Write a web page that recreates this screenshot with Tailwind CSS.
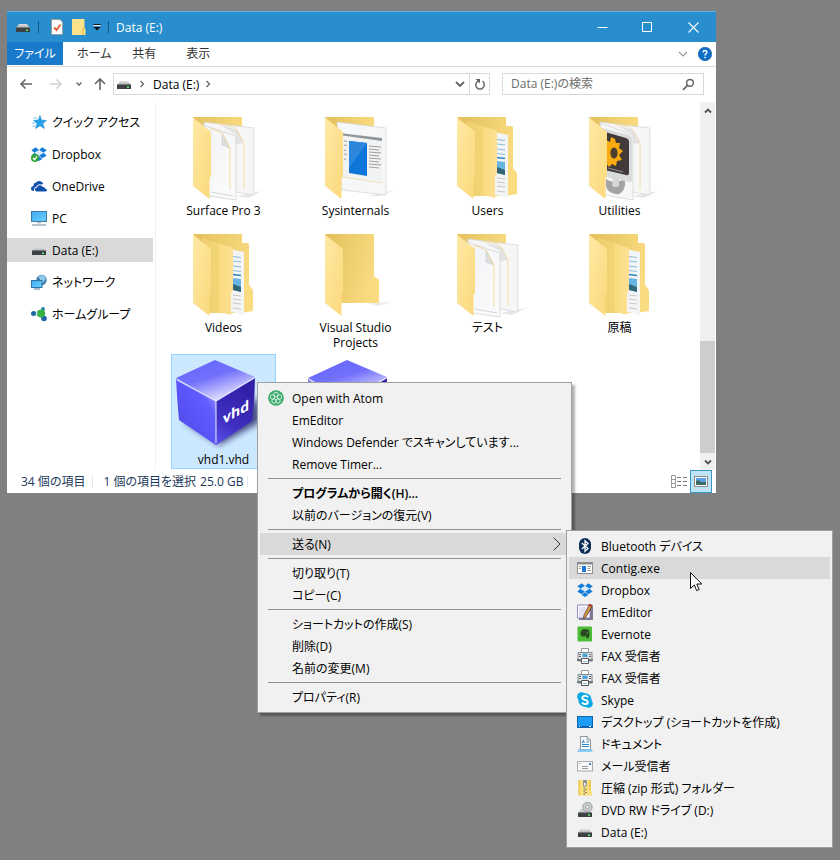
<!DOCTYPE html>
<html lang="ja">
<head>
<meta charset="utf-8">
<title>Data (E:)</title>
<script src="https://cdn.jsdelivr.net/npm/@tailwindcss/browser@4"></script>
</head>
<body class="relative min-h-screen overflow-hidden bg-[#808080] pt-[11px] pr-[124px] pl-[7px] font-['Open_Sans','Noto_Sans_CJK_JP',sans-serif] text-[12px] leading-[15px] text-black [font-feature-settings:'palt']">

<svg class="absolute size-0" aria-hidden="true">
  <defs>
    <linearGradient id="gFront" x1="0" y1="0" x2="1" y2="1"><stop offset="0" stop-color="#ffe9a6"/><stop offset="1" stop-color="#fbd97a"/></linearGradient>
    <linearGradient id="gBack" x1="0" y1="0" x2="1" y2="0.3"><stop offset="0" stop-color="#e3c05c"/><stop offset="1" stop-color="#fadb80"/></linearGradient>
    <linearGradient id="gMid" x1="0" y1="0" x2="1" y2="0"><stop offset="0" stop-color="#efcf6f"/><stop offset=".55" stop-color="#f3d577"/><stop offset=".56" stop-color="#fadc82"/><stop offset="1" stop-color="#fde093"/></linearGradient>
    <linearGradient id="gPage" x1="0" y1="0" x2="1" y2="1"><stop offset="0" stop-color="#f0f2f5"/><stop offset="1" stop-color="#fbfcfd"/></linearGradient>
    <linearGradient id="gTop" x1="0.1" y1="0" x2="0.7" y2="1"><stop offset="0" stop-color="#6664ff"/><stop offset=".45" stop-color="#7270fb"/><stop offset="1" stop-color="#f4f4ff"/></linearGradient>
    <linearGradient id="gLeft" x1="0" y1="1" x2="1" y2="0"><stop offset="0" stop-color="#4d46e6"/><stop offset=".7" stop-color="#605cff"/><stop offset="1" stop-color="#b6b4ff"/></linearGradient>
    <linearGradient id="gRight" x1="0" y1="1" x2="0.4" y2="0"><stop offset="0" stop-color="#5b52f2"/><stop offset=".4" stop-color="#3f2fc0"/><stop offset="1" stop-color="#3020a8"/></linearGradient>
    <linearGradient id="gScreen" x1="0" y1="0" x2="1" y2="1"><stop offset="0" stop-color="#3fa9f0"/><stop offset="1" stop-color="#6fd0ff"/></linearGradient>
    <linearGradient id="gDrive" x1="0" y1="0" x2="0" y2="1"><stop offset="0" stop-color="#e4e4e4"/><stop offset="1" stop-color="#a9adae"/></linearGradient>
    <filter id="blur"><feGaussianBlur stdDeviation="3"/></filter>

    <symbol id="back" viewBox="0 0 96 96"><path d="M60 80L84 79L70 83Z" fill="#ececec"/><path d="M17 11H66V53L71 57V80H33L17 70Z" fill="url(#gBack)"/></symbol>
    <symbol id="front" viewBox="0 0 96 96"><path d="M17 11.500L35 26V70L33.500 72V93L17 80Z" fill="url(#gFront)"/></symbol>
    <symbol id="folder" viewBox="0 0 96 96"><use href="#back"/><use href="#front"/></symbol>
    <symbol id="pageR" viewBox="0 0 96 96"><path d="M17 11H66V40H30Z" fill="url(#gBack)"/><path d="M60 90L86 85L72 92Z" fill="#e6e6e6"/><path d="M28 16L78 22V89L60 86H34Z" fill="#f6f6f7" stroke="#d2d2d2" stroke-width=".7"/><path d="M45 20Q58 22 62 25L68 37L60 38V28Z" fill="#e3e3e5"/><path d="M43 18.500Q58 20 61 24L68 37V83" fill="none" stroke="#f3d995" stroke-width=".8"/></symbol>
    <symbol id="papers" viewBox="0 0 96 96"><use href="#pageR"/><path d="M24 18L60 30V94L33 90Z" fill="url(#gPage)" stroke="#cfcfcf" stroke-width=".7"/><path d="M46 27V39L54 42Z" fill="#dcdde0" stroke="#c4c4c4" stroke-width=".5"/><path d="M34 23Q43 24 47 29L54 42V84" fill="none" stroke="#f3d995" stroke-width=".9"/><path d="M35 86L57 90" stroke="#c8c8c8" stroke-width=".7"/><use href="#front"/></symbol>
    <symbol id="docs" viewBox="0 0 96 96"><path d="M17 11H66V20H71L73 21V62L77 67V88L65 90H30V30Z" fill="url(#gBack)"/><path d="M50 25L68 29V92L52 88Z" fill="#f3f4f6"/><g stroke="#7ab8d8" stroke-width=".9"><path d="M57 33.500L65 34.500M57 38L65 39M57 43L65 44M57 47.500L65 48.500"/><path d="M57 51.500L65 52.500" stroke="#2a86b8" stroke-width="1.300"/></g><path d="M57 55L65 56V69L57 67Z" fill="#68b4e2"/><path d="M57 61L65 64V69L57 67Z" fill="#316779"/><path d="M57 72L65 73M57 76L65 77M57 80L65 81M57 85L65 86" stroke="#bdbdbd" stroke-width=".8"/><path d="M26 15L57 25V67L55 71V92L33 86Z" fill="url(#gMid)"/><use href="#front"/></symbol>
    <symbol id="sysint" viewBox="0 0 96 96"><path d="M17 11H66V40H30Z" fill="url(#gBack)"/><path d="M60 90L86 84L72 90Z" fill="#e6e6e6"/><path d="M29 16L78 22V89L34 84Z" fill="#f6f7f8" stroke="#d2d2d2" stroke-width=".7"/><path d="M31 27L74 33V76L31 70Z" fill="#f1f2f3"/><path d="M31 27L74 32V35L31 29Z" fill="#939699"/><path d="M41 35L59 37V70L41 67Z" fill="#0c77d8"/><path d="M41 35L59 37L41 62Z" fill="#2c86dc"/><path d="M61 40L73 41M61 43L71 44M61 46L73 47M61 49L71 50M61 52L73 53M61 55L71 56M61 58L73 59M61 61L71 62M36 35L39 35.500M36 39L39 39.500M36 44L38 44.500M36 48L39 48.500M36 53L38 53.500" stroke="#969696" stroke-width=".9"/><path d="M35 71L74 77" stroke="#ecd9a2" stroke-width=".8"/><use href="#front"/></symbol>
    <symbol id="util" viewBox="0 0 96 96"><use href="#pageR"/><path d="M28 17L61 29V94L33 89Z" fill="#f7f7f8" stroke="#d0d0d0" stroke-width=".7"/><path d="M34 73Q42 79 53 73V80Q50 90 43 88Q35 86 34 80Z" fill="#a4a4a4"/><path d="M41 68H47V80Q43 82 40 80Z" fill="#d7d7d7"/><path d="M30 22L57 29Q60 30 60 33V74Q60 76 57 76L30 70Z" fill="#d9dadb"/><path d="M33 26L54 32Q57 33 57 36V67Q57 70 54 69L33 64Z" fill="#413a38"/><path d="M36 62L51 66" stroke="#aaa" stroke-width=".8"/><path d="M39 31L43 33L44 37L48 37L47 42L51 45L47 49L50 54L45 55L44 60L40 58L37 61L34 57V34L38 36Z" fill="#fbab10"/><ellipse cx="42" cy="47" rx="3.600" ry="5.500" fill="#4b3e30"/><use href="#front"/></symbol>
    <symbol id="vhd" viewBox="0 0 96 96"><path d="M7 66L43 90L84 67L82 42L60 60Z" fill="#16125c" opacity=".75" filter="url(#blur)"/><path d="M0 24L40 46V90L3 65Q1 44 0 24Z" fill="url(#gLeft)"/><path d="M79 23L40 46V90L76 66Q79 44 79 23Z" fill="url(#gRight)"/><path d="M0 23L39 5L79 22L40 46Z" fill="url(#gTop)"/><path d="M1 25L40 46L78 23M40 46V88" fill="none" stroke="#e9e8ff" stroke-width="1.200" opacity=".85"/><text transform="translate(47 69) skewY(-29)" font-family="Open Sans" font-weight="700" font-size="14" fill="#fff">vhd</text></symbol>

    <symbol id="drive" viewBox="0 0 16 16"><path d="M4 5H12L15 9H1Z" fill="url(#gDrive)"/><rect x="1" y="8.500" width="14" height="4.500" rx=".5" fill="#3d4144"/><rect x="11" y="10.500" width="2" height="1.500" fill="#5ef06a"/></symbol>
    <symbol id="star" viewBox="0 0 16 16"><path d="M9 1.500L10.500 6L15.500 6.500L11.800 9.500L13.500 14.500L9 11.800L4.500 14.500L6 9.500L2.500 6.500L7.300 6Z" fill="#25a2ec" stroke="#1580c4" stroke-width=".5"/><path d="M2 4H6M1 9H4M1.500 12H4.500" stroke="#76c6f2"/></symbol>
    <symbol id="dropbox" viewBox="0 0 16 16"><path fill="#137ddc" d="M4.700 1.300L8 4L3.500 6.800L.3 4.200ZM11.300 1.300L8 4L12.500 6.800L15.700 4.200ZM.3 9.400L3.500 6.800L8 9.600L4.700 12.200ZM15.700 9.400L12.500 6.800L8 9.600L11.300 12.200ZM4.700 13L8 10.300L11.300 13L8 15Z"/><path d="M8 4L12.500 6.800L8 9.600L3.500 6.800Z" fill="#dbe9f8"/></symbol>
    <symbol id="dropboxOk" viewBox="0 0 16 16"><use href="#dropbox"/><circle cx="4" cy="12" r="4" fill="#35a43a"/><path d="M2 12L3.500 13.700L6 10.300" stroke="#fff" stroke-width="1.200" fill="none"/></symbol>
    <symbol id="onedrive" viewBox="0 0 16 16"><path d="M3 13Q0 13 0 10.500Q0 8.300 2.500 8Q2.500 4.800 5.500 4.200Q7 2.800 9 3.200Q11.500 3.500 12.200 6L10 6.500Q7 5.500 5.500 8.500Q3 9 3 11.500Z" fill="#0f50ad"/><path d="M5.500 13.500Q3.700 13 3.900 11.300Q4.200 9.600 6 9.500Q6.500 7.200 9 7.200Q11 7.200 11.800 9Q13.800 8.700 14 10.500Q16 10.800 16 12.200Q15.800 13.500 14.500 13.500Z" fill="#0f50ad"/></symbol>
    <symbol id="pc" viewBox="0 0 16 16"><rect x=".5" y="1.500" width="15" height="10" fill="url(#gScreen)" stroke="#3b7ba6"/><path d="M6 12H10V13.500H6Z" fill="#b6c4cd"/><path d="M1 15H15" stroke="#6e8495"/></symbol>
    <symbol id="net" viewBox="0 0 16 16"><circle cx="10.500" cy="6" r="5.200" fill="#3f7da8"/><path d="M7 3Q10 5 9 8L12 9Q14 6 15 4Q12 0 8 2Z" fill="#8dcdea"/><rect x=".5" y="6.500" width="10.500" height="7" fill="url(#gScreen)" stroke="#2c76a5"/><path d="M3 15H9" stroke="#56758c"/></symbol>
    <symbol id="home" viewBox="0 0 16 16"><path d="M3 7L11 4M3 8L12 12" stroke="#7fb2d4"/><circle cx="2.500" cy="7.500" r="2.500" fill="#1f66a8"/><circle cx="12" cy="3" r="2" fill="#2a86b2"/><circle cx="13" cy="12.500" r="2.800" fill="#1f66a8"/><circle cx="10.200" cy="7.500" r="4" fill="#35b344"/></symbol>
    <symbol id="atom" viewBox="0 0 16 16"><circle cx="8" cy="8" r="7.800" fill="#3dab6f"/><g fill="none" stroke="#def5e6" stroke-width=".9"><circle cx="8" cy="4.500" r="2.200"/><circle cx="4.600" cy="7" r="2.200"/><circle cx="11.400" cy="7" r="2.200"/><circle cx="6" cy="11" r="2.200"/><circle cx="10" cy="11" r="2.200"/></g></symbol>
    <symbol id="bt" viewBox="0 0 16 16"><rect x="2" y="0" width="12" height="16" rx="6" fill="#0c2d57"/><path d="M4.800 5L11 10.500L8 13.300V2.700L11 5.500L4.800 11" fill="none" stroke="#fff" stroke-width="1.300"/></symbol>
    <symbol id="contig" viewBox="0 0 16 16"><rect x=".5" y="2.500" width="15" height="11" fill="#fff" stroke="#8d8d8d"/><path d="M0 2H16V4.500H0Z" fill="#8d8d8d"/><rect x="5" y="6" width="4" height="6" fill="#1479d7"/><path d="M10.500 6.500H14M10.500 8.500H13M10.500 10.500H14M2 6.500H4M2 8.500H4" stroke="#999"/></symbol>
    <symbol id="em" viewBox="0 0 16 16"><path d="M2 3H16V16H2Z" fill="#82788f"/><path d="M.5 1H13V14H.5Z" fill="#fff" stroke="#7b72b8" stroke-width=".8"/><path d="M2 4H9M2 6H9M2 8H8M2 10H7M2 12H6" stroke="#b9b7de" stroke-width=".8"/><path d="M12.500 0L15.500 1.500L9 13L6.500 14.500L6.800 11.500Z" fill="#d79747" stroke="#563425" stroke-width=".7"/><path d="M12.500 0L15.500 1.500L14.700 3.200L11.500 1.800Z" fill="#b43c30"/></symbol>
    <symbol id="ever" viewBox="0 0 16 16"><rect x=".5" y=".5" width="14.500" height="15" rx="1" fill="#4dbd35"/><path d="M5.500 3.500L3.500 6Q3 10 5.500 10.500H8L8.500 9Q9 12 10 12.500Q12.500 12.500 12.500 8Q12.500 3.500 10.500 3.500L8 3Z" fill="#2b4a24"/><circle cx="10.500" cy="7" r=".7" fill="#4dbd35"/></symbol>
    <symbol id="fax" viewBox="0 0 16 16"><path d="M4.500 0.500H11.500V5H4.500Z" fill="#fff" stroke="#9b9b9b"/><path d="M1 4.500H15V13H1Z" fill="#e2e6e9" stroke="#808a92"/><rect x="5.500" y="5.500" width="5" height="3.500" fill="#4e9fd6"/><path d="M2 6.500H4M2 8.500H4M12 6.500H14M12 8.500H14" stroke="#60686e"/><path d="M0 11H16V13H0Z" fill="#707b83"/><path d="M4.500 10.500H11.500V15.500H4.500Z" fill="#fff" stroke="#555"/><path d="M6 13.500H10" stroke="#88b6d5"/></symbol>
    <symbol id="skype" viewBox="0 0 16 16"><circle cx="4.500" cy="4.500" r="4.300" fill="#09a8e4"/><circle cx="11.500" cy="11.500" r="4.300" fill="#09a8e4"/><circle cx="8" cy="8" r="6.700" fill="#09a8e4"/><path d="M11 5.200Q10 3.800 8 3.900Q5.300 4 5.300 5.900Q5.300 7.300 8 7.900Q10.900 8.500 10.800 10.100Q10.600 12.100 8 12.100Q5.800 12.100 5 10.500" stroke="#fff" stroke-width="1.900" fill="none"/></symbol>
    <symbol id="desk" viewBox="0 0 16 16"><rect x=".5" y="2.500" width="15" height="11" fill="#1b9cf5" stroke="#0f65ae"/><path d="M1 12.500H15" stroke="#0a5fa6"/><path d="M2 12.500H3M12 12.500H14" stroke="#fff"/></symbol>
    <symbol id="docu" viewBox="0 0 16 16"><path d="M3.500 .5H10L13.500 4V13.500H3.500Z" fill="#fff" stroke="#8c959b"/><path d="M10 .5V4H13.500" fill="none" stroke="#8c959b"/><path d="M5 6H8M9 6H12M5 8.500H12M5 10.500H12M7 3.500L5 7" stroke="#2e86c9"/><path d="M2 13H14L16 15.800H0Z" fill="#7dc3f0"/></symbol>
    <symbol id="mail" viewBox="0 0 16 16"><rect x=".5" y="3.500" width="15" height="9.500" fill="#f8f8f8" stroke="#aaa"/><path d="M2 5.500H4" stroke="#bbb"/><rect x="12" y="5" width="2" height="2" fill="#3c7fd0"/><path d="M5 8.500H11M5 10.500H11" stroke="#999"/></symbol>
    <symbol id="zip" viewBox="0 0 16 16"><path d="M1.500 0H14V11L15 12V15.500H1.500Z" fill="#fadf7f"/><path d="M1.500 0H3V15.500H1.500ZM12 0H14V10H12Z" fill="#efc757"/><rect x="6" y="0" width="4" height="6.500" rx="1" fill="#8f9194"/><rect x="7.200" y="3" width="1.600" height="2.500" fill="#fff"/><path d="M6.500 8H8M8 9.500H9.500M6.500 11H8M8 12.500H9.500M6.500 14H8" stroke="#5e5e5e"/></symbol>
    <symbol id="dvd" viewBox="0 0 16 16"><path d="M4 7H13L15 11H1Z" fill="#c8cbcc"/><circle cx="10.500" cy="5" r="4.700" fill="#c9cdcf" stroke="#8f9496" stroke-width=".8"/><circle cx="10.500" cy="5" r="1.700" fill="#f3f3f3" stroke="#8f9496" stroke-width=".8"/><rect x="1" y="10.500" width="14" height="4.500" rx=".5" fill="#3d4144"/><rect x="11" y="12.300" width="2" height="1.500" fill="#5ef06a"/></symbol>
  </defs>
</svg>

<main class="bg-white">
  <header class="flex h-[31px] items-center border-t border-[#5fb0de] bg-[#288ecd] pl-2 text-white">
    <svg class="size-4"><use href="#drive"/></svg>
    <span class="ml-[7px] h-3 w-px bg-[#12598a]"></span>
    <button class="ml-[11px]" aria-label="プロパティ"><svg class="h-4 w-[14px]" viewBox="0 0 14 16"><path d="M1.500 .5H10L12.500 3V15.500H1.500Z" fill="#fff" stroke="#9c9c9c"/><path d="M4 8.500L6.500 11L10.500 5.500" fill="none" stroke="#e0592a" stroke-width="1.800"/></svg></button>
    <button class="ml-2" aria-label="新しいフォルダー"><svg class="h-4 w-[14px]" viewBox="0 0 14 16"><path d="M0 0H12.500V9L13.500 10V16H0Z" fill="#fde18a"/><path d="M11 16V10L12.500 8.500" fill="none" stroke="#dcb54a"/></svg></button>
    <button class="ml-[6px]" aria-label="クイック アクセス ツール バーのカスタマイズ"><svg class="size-[10px]" viewBox="0 0 10 10"><path d="M1.500 2.500H8.500" stroke="#111"/><path d="M1.500 3.500H8.500" stroke="#fff"/><path d="M1.500 5H8.500L5 8.500Z" fill="#111"/></svg></button>
    <span class="ml-[6px] h-3 w-px bg-[#12598a]"></span>
    <h1 class="ml-[7px] flex-1">Data (E:)</h1>
    <button class="grid h-[30px] w-[45px] place-items-center" aria-label="最小化"><svg class="size-[11px]" viewBox="0 0 11 11"><path d="M.5 5.500H10.500" stroke="#fff"/></svg></button>
    <button class="grid h-[30px] w-[45px] place-items-center" aria-label="最大化"><svg class="size-[11px]" viewBox="0 0 11 11"><rect x=".5" y=".5" width="9" height="9" fill="none" stroke="#fff"/></svg></button>
    <button class="grid h-[30px] w-[46px] place-items-center" aria-label="閉じる"><svg class="size-[11px]" viewBox="0 0 11 11"><path d="M.5 .5L10.500 10.500M10.500 .5L.5 10.500" stroke="#fff" stroke-width="1.100"/></svg></button>
  </header>

  <nav class="flex h-[25px] items-start border-b border-[#dadbdc] pr-[4px] text-[#333]" aria-label="リボン">
    <button class="h-[23px] w-14 bg-[#1979ca] text-white">ファイル</button>
    <button class="ml-2 h-[23px] px-[6px]">ホーム</button>
    <button class="ml-[9px] h-[23px] px-[6px]">共有</button>
    <button class="ml-[18px] h-[23px] px-[6px]">表示</button>
    <span class="flex-1"></span>
    <button class="h-[23px]" aria-label="リボンの展開"><svg class="h-2 w-[10px]" viewBox="0 0 10 8"><path d="M1 2L5 6L9 2" fill="none" stroke="#999" stroke-width="1.200"/></svg></button>
    <button class="ml-[10px] grid h-[23px] place-items-center" aria-label="ヘルプ"><svg class="size-[14px]" viewBox="0 0 14 14"><circle cx="7" cy="7" r="6.700" fill="#0e6fc6" stroke="#0a509c" stroke-width=".6"/><path d="M5 5.300Q5.200 3.500 7 3.500Q9 3.600 9 5.200Q8.900 6.200 7.900 6.800Q7 7.400 7 8.500M7 9.800V11.200" fill="none" stroke="#fff" stroke-width="1.400"/></svg></button>
  </nav>

  <div class="flex h-[35px] items-center gap-3 px-3 pb-px">
    <div class="flex flex-1 items-center">
      <button aria-label="戻る"><svg class="size-[14px]" viewBox="0 0 14 14"><path d="M13 7H2M6.500 2.500L2 7L6.500 11.500" fill="none" stroke="#666" stroke-width="1.600"/></svg></button>
      <button class="ml-4" aria-label="進む"><svg class="size-[14px]" viewBox="0 0 14 14"><path d="M1 7H12M7.500 2.500L12 7L7.500 11.500" fill="none" stroke="#d4d4d4" stroke-width="1.600"/></svg></button>
      <button class="ml-3" aria-label="最近表示した場所"><svg class="size-2" viewBox="0 0 8 8"><path d="M1.500 2.500L4 5L6.500 2.500" fill="none" stroke="#777" stroke-width="1.600"/></svg></button>
      <button class="ml-[10px]" aria-label="上へ"><svg class="size-[14px]" viewBox="0 0 14 14"><path d="M7 13V2M2 7L7 2L12 7" fill="none" stroke="#666" stroke-width="1.600"/></svg></button>
      <div class="ml-[6px] flex h-[22px] flex-1 items-center border border-[#d9d9d9] pl-[2px]">
        <svg class="size-4"><use href="#drive"/></svg>
        <svg class="ml-[6px] size-2" viewBox="0 0 8 8"><path d="M2.500 1L5.500 4L2.500 7" fill="none" stroke="#666" stroke-width="1.300"/></svg>
        <a href="#" class="ml-[7px]">Data (E:)</a>
        <svg class="ml-[5px] size-2" viewBox="0 0 8 8"><path d="M2.500 1L5.500 4L2.500 7" fill="none" stroke="#666" stroke-width="1.300"/></svg>
        <span class="flex-1"></span>
        <button class="mr-1" aria-label="以前の場所"><svg class="size-[10px]" viewBox="0 0 10 10"><path d="M1 3L5 7L9 3" fill="none" stroke="#666" stroke-width="1.900"/></svg></button>
        <button class="grid h-5 w-5 place-items-center border-l border-[#d9d9d9]" aria-label="最新の情報に更新"><svg class="size-3" viewBox="0 0 12 12"><path d="M8.500 3Q10.500 4.500 10.200 7A4.200 4.200 0 1 1 3.500 3.500L5.500 2.500" fill="none" stroke="#666" stroke-width="1.500"/><path d="M1.500 1H6V5.500Z" fill="#666"/></svg></button>
      </div>
    </div>
    <label class="flex h-[22px] w-[202px] items-center border border-[#d9d9d9] px-2">
      <span class="sr-only">検索</span>
      <input type="search" placeholder="Data (E:)の検索" class="h-5 min-w-0 flex-1 leading-5 outline-none placeholder:text-[#6d6d6d]">
      <svg class="size-[13px]" viewBox="0 0 13 13"><circle cx="8" cy="4.800" r="3.400" fill="none" stroke="#666" stroke-width="1.500"/><path d="M5.500 7.300L1 11.800" stroke="#666" stroke-width="1.800"/></svg>
    </label>
  </div>

  <div class="flex h-[368px]">
    <nav class="flex w-[149px] shrink-0 flex-col gap-2 border-r border-[#f0f0f0] pt-2 pr-[2px]" aria-label="ナビゲーション ウィンドウ">
      <a href="#" class="flex h-6 items-center gap-[5px] pl-6"><svg class="size-4"><use href="#star"/></svg>クイック アクセス</a>
      <a href="#" class="flex h-6 items-center gap-[5px] pl-6"><svg class="size-4"><use href="#dropboxOk"/></svg>Dropbox</a>
      <a href="#" class="flex h-6 items-center gap-[5px] pl-6"><svg class="size-4"><use href="#onedrive"/></svg>OneDrive</a>
      <a href="#" class="flex h-6 items-center gap-[5px] pl-6"><svg class="size-4"><use href="#pc"/></svg>PC</a>
      <a href="#" class="flex h-6 items-center gap-[5px] bg-[#d9d9d9] pl-6"><svg class="size-4"><use href="#drive"/></svg>Data (E:)</a>
      <a href="#" class="flex h-6 items-center gap-[5px] pl-6"><svg class="size-4"><use href="#net"/></svg>ネットワーク</a>
      <a href="#" class="flex h-6 items-center gap-[5px] pl-6"><svg class="size-4"><use href="#home"/></svg>ホームグループ</a>
    </nav>
    <ul class="grid flex-1 grid-cols-[repeat(auto-fill,105px)] content-start gap-x-[27px] gap-y-[2px] overflow-hidden pt-[3px] pl-[15px] text-center">
      <li class="flex flex-col items-center gap-px px-3 pt-px pb-[2px]"><svg class="size-24"><use href="#papers"/></svg>Surface Pro 3</li>
      <li class="flex flex-col items-center gap-px px-3 pt-px pb-[2px]"><svg class="size-24"><use href="#sysint"/></svg>Sysinternals</li>
      <li class="flex flex-col items-center gap-px px-3 pt-px pb-[2px]"><svg class="size-24"><use href="#docs"/></svg>Users</li>
      <li class="flex flex-col items-center gap-px px-3 pt-px pb-[2px]"><svg class="size-24"><use href="#util"/></svg>Utilities</li>
      <li class="flex flex-col items-center gap-px px-3 pt-px pb-[2px]"><svg class="size-24"><use href="#docs"/></svg>Videos</li>
      <li class="flex flex-col items-center gap-px px-3 pt-px pb-[2px]"><svg class="size-24 shrink-0"><use href="#folder"/></svg>Visual Studio Projects</li>
      <li class="flex flex-col items-center gap-px px-3 pt-px pb-[2px]"><svg class="size-24"><use href="#papers"/></svg>テスト</li>
      <li class="flex flex-col items-center gap-px px-3 pt-px pb-[2px]"><svg class="size-24"><use href="#docs"/></svg>原稿</li>
      <li class="flex flex-col items-center gap-px bg-[#cce8ff] px-3 pt-px pb-[2px] outline -outline-offset-1 outline-[#99d1ff]"><svg class="size-24"><use href="#vhd"/></svg>vhd1.vhd</li>
      <li class="flex flex-col items-center gap-px px-3 pt-px pb-[2px]"><svg class="size-24"><use href="#vhd"/></svg></li>
    </ul>
    <div class="mr-px flex w-[15px] flex-col items-center bg-[#f0f0f0]">
      <button class="grid h-[17px] w-full place-items-center" aria-label="上へスクロール"><svg class="size-2" viewBox="0 0 8 8"><path d="M1 5.500L4 2.500L7 5.500" fill="none" stroke="#555" stroke-width="1.900"/></svg></button>
      <span class="flex-1"></span>
      <span class="h-[112px] w-full bg-[#cdcdcd]"></span>
      <button class="grid h-[17px] w-full place-items-center" aria-label="下へスクロール"><svg class="size-2" viewBox="0 0 8 8"><path d="M1 2.500L4 5.500L7 2.500" fill="none" stroke="#555" stroke-width="1.900"/></svg></button>
    </div>
  </div>

  <footer class="flex h-[23px] items-center pr-[4px] pl-[14px] text-[#1e395b]">
    <span>34 個の項目</span>
    <span class="ml-[7px] h-3 w-px bg-[#e6e6e6]"></span>
    <span class="ml-[10px]">1 個の項目を選択</span>
    <span class="ml-1">25.0 GB</span>
    <span class="ml-1 h-3 w-px bg-[#e6e6e6]"></span>
    <span class="flex-1"></span>
    <button aria-label="詳細表示"><svg class="h-[13px] w-4" viewBox="0 0 16 13"><path d="M.5 .5H4.500V12.500H.5ZM.5 4.500H4.500M.5 8.500H4.500" fill="none" stroke="#999"/><path d="M6 2.500H10M12 2.500H16M6 6.500H10M12 6.500H16M6 10.500H10M12 10.500H16" stroke="#777"/></svg></button>
    <button class="ml-[3px] grid h-[23px] w-[22px] place-items-center border border-[#3a97c6] bg-[#bfe4f5]" aria-label="大アイコン"><svg class="h-[11px] w-[14px]" viewBox="0 0 14 11"><rect x=".5" y=".5" width="13" height="10" fill="#fff" stroke="#8d8d8d"/><path d="M2 2H12V9H2Z" fill="#5da0e6"/><path d="M2 5Q5 3 7 6L12 6V9H2Z" fill="#3c6d62"/></svg></button>
  </footer>
</main>

<div role="menu" class="absolute top-[382px] left-[257px] w-[315px] border border-[#a0a0a0] bg-[#f1f1f1] px-[2px] py-1 shadow-[3px_3px_2px_rgba(0,0,0,0.3)]">
  <button role="menuitem" class="flex h-[22px] w-full items-center gap-2 pl-2"><svg class="size-4"><use href="#atom"/></svg>Open with Atom</button>
  <button role="menuitem" class="flex h-[22px] w-full items-center pl-8">EmEditor</button>
  <button role="menuitem" class="flex h-[22px] w-full items-center pl-8">Windows Defender でスキャンしています...</button>
  <button role="menuitem" class="flex h-[22px] w-full items-center pl-8">Remove Timer...</button>
  <hr class="mx-2 my-[3px] border-[#919191]">
  <button role="menuitem" class="flex h-[22px] w-full items-center pl-8 font-semibold">プログラムから開く(H)...</button>
  <button role="menuitem" class="flex h-[22px] w-full items-center pl-8">以前のバージョンの復元(V)</button>
  <hr class="mx-2 my-[3px] border-[#919191]">
  <div class="relative">
    <button role="menuitem" aria-haspopup="menu" aria-expanded="true" class="flex h-[22px] w-full items-center justify-between bg-[#d9d9d9] pr-2 pl-8">送る(N)<svg class="h-[14px] w-2" viewBox="0 0 8 14"><path d="M.7 .7L7 7L.7 13.300" fill="none" stroke="#333"/></svg></button>
    <div role="menu" class="absolute top-[-3px] left-[306px] w-[267px] border border-[#a0a0a0] bg-[#f1f1f1] px-[2px] py-1">
      <button role="menuitem" class="flex h-[22px] w-full items-center gap-2 pl-2"><svg class="size-4"><use href="#bt"/></svg>Bluetooth デバイス</button>
      <button role="menuitem" class="flex h-[22px] w-full items-center gap-2 bg-[#d9d9d9] pl-2"><svg class="size-4"><use href="#contig"/></svg>Contig.exe</button>
      <button role="menuitem" class="flex h-[22px] w-full items-center gap-2 pl-2"><svg class="size-4"><use href="#dropbox"/></svg>Dropbox</button>
      <button role="menuitem" class="flex h-[22px] w-full items-center gap-2 pl-2"><svg class="size-4"><use href="#em"/></svg>EmEditor</button>
      <button role="menuitem" class="flex h-[22px] w-full items-center gap-2 pl-2"><svg class="size-4"><use href="#ever"/></svg>Evernote</button>
      <button role="menuitem" class="flex h-[22px] w-full items-center gap-2 pl-2"><svg class="size-4"><use href="#fax"/></svg>FAX 受信者</button>
      <button role="menuitem" class="flex h-[22px] w-full items-center gap-2 pl-2"><svg class="size-4"><use href="#fax"/></svg>FAX 受信者</button>
      <button role="menuitem" class="flex h-[22px] w-full items-center gap-2 pl-2"><svg class="size-4"><use href="#skype"/></svg>Skype</button>
      <button role="menuitem" class="flex h-[22px] w-full items-center gap-2 pl-2"><svg class="size-4"><use href="#desk"/></svg>デスクトップ (ショートカットを作成)</button>
      <button role="menuitem" class="flex h-[22px] w-full items-center gap-2 pl-2"><svg class="size-4"><use href="#docu"/></svg>ドキュメント</button>
      <button role="menuitem" class="flex h-[22px] w-full items-center gap-2 pl-2"><svg class="size-4"><use href="#mail"/></svg>メール受信者</button>
      <button role="menuitem" class="flex h-[22px] w-full items-center gap-2 pl-2"><svg class="size-4"><use href="#zip"/></svg>圧縮 (zip 形式) フォルダー</button>
      <button role="menuitem" class="flex h-[22px] w-full items-center gap-2 pl-2"><svg class="size-4"><use href="#dvd"/></svg>DVD RW ドライブ (D:)</button>
      <button role="menuitem" class="flex h-[22px] w-full items-center gap-2 pl-2"><svg class="size-4"><use href="#drive"/></svg>Data (E:)</button>
    </div>
  </div>
  <hr class="mx-2 my-[3px] border-[#919191]">
  <button role="menuitem" class="flex h-[22px] w-full items-center pl-8">切り取り(T)</button>
  <button role="menuitem" class="flex h-[22px] w-full items-center pl-8">コピー(C)</button>
  <hr class="mx-2 my-[3px] border-[#919191]">
  <button role="menuitem" class="flex h-[22px] w-full items-center pl-8">ショートカットの作成(S)</button>
  <button role="menuitem" class="flex h-[22px] w-full items-center pl-8">削除(D)</button>
  <button role="menuitem" class="flex h-[22px] w-full items-center pl-8">名前の変更(M)</button>
  <hr class="mx-2 my-[3px] border-[#919191]">
  <button role="menuitem" class="flex h-[22px] w-full items-center pl-8">プロパティ(R)</button>
</div>

<svg class="pointer-events-none absolute top-[572px] left-[690px] h-[20px] w-[13px]" viewBox="0 0 13 20"><path d="M.5 .5V16.500L4.300 12.900L6.700 18.600L9.200 17.500L6.800 12H11.800Z" fill="#fff" stroke="#111"/></svg>
</body>
</html>
